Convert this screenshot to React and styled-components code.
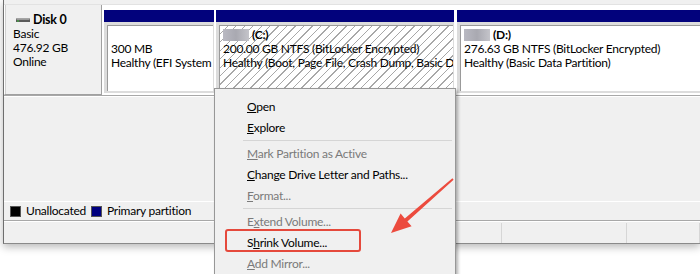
import styled, { createGlobalStyle } from 'styled-components';

const GlobalStyle = createGlobalStyle`
  html, body {
    margin: 0;
    padding: 0;
    background: #fff;
  }
  body {
    font-family: Lato, "Segoe UI", "Liberation Sans", sans-serif;
    font-size: 12px;
    letter-spacing: -0.25px;
    color: #000;
  }
`;

const partitions = [
    { id: 'efi', width: 110, name: null, size: '300 MB', status: 'Healthy (EFI System Partition)' },
    { id: 'c', width: 238, name: '(C:)', size: '200.00 GB NTFS (BitLocker Encrypted)', status: 'Healthy (Boot, Page File, Crash Dump, Basic Data Partition)', hatched: true },
    { id: 'd', width: 262, name: '(D:)', size: '276.63 GB NTFS (BitLocker Encrypted)', status: 'Healthy (Basic Data Partition)' },
];

const menuItems = [
    { label: 'Open', key: 0 },
    { label: 'Explore', key: 0 },
    { separator: true },
    { label: 'Mark Partition as Active', key: 0, disabled: true },
    { label: 'Change Drive Letter and Paths...', key: 0 },
    { label: 'Format...', key: 0, disabled: true },
    { separator: true },
    { label: 'Extend Volume...', key: 1, disabled: true },
    { label: 'Shrink Volume...', key: 1, marked: true },
    { label: 'Add Mirror...', key: 0, disabled: true },
];

const Mnemonic = ({ text, at }) => (
    <>
        {text.slice(0, at)}
        <u>{text[at]}</u>
        {text.slice(at + 1)}
    </>
);

const DiskIcon = () => (
    <svg width="14" height="5" viewBox="0 0 14 5">
        <rect x="0" y="0.5" width="14" height="3.5" fill="#5a5a5a" />
        <rect x="0.5" y="1" width="13" height="1" fill="#9a9a9a" />
        <rect x="1" y="2.5" width="2" height="1" fill="#3fbf3f" />
    </svg>
);

const Arrow = () => (
    <ArrowSvg width="80" height="75" viewBox="0 0 80 75">
        <polygon
            points="73.6,9.8 27.4,51.4 31.6,56.2 11,63 20.6,43.6 24.8,48.4 72.4,8.2"
            fill="#ec4b3e"
        />
    </ArrowSvg>
);

export const App = () => {
    return (
        <>
            <GlobalStyle />
            <Stage>
                <Window>
                    <TopStrip />
                    <DiskRow>
                        <DiskLabel>
                            <DiskTitle>
                                <DiskIcon />
                                <b>Disk 0</b>
                            </DiskTitle>
                            <div>Basic</div>
                            <div>476.92 GB</div>
                            <div>Online</div>
                        </DiskLabel>
                        <PartitionList>
                            {partitions.map(p => (
                                <Partition key={p.id} $width={p.width}>
                                    <PartitionBar />
                                    <PartitionFrame>
                                        <PartitionBody $hatched={p.hatched}>
                                            <Line>
                                                {p.name && (
                                                    <>
                                                        <Blur />
                                                        <b>{p.name}</b>
                                                    </>
                                                )}
                                            </Line>
                                            <Line>{p.size}</Line>
                                            <Line>{p.status}</Line>
                                        </PartitionBody>
                                    </PartitionFrame>
                                </Partition>
                            ))}
                        </PartitionList>
                    </DiskRow>
                    <EmptyArea />
                    <Legend>
                        <Swatch $color="#000" />
                        <span>Unallocated</span>
                        <Swatch $color="#00007f" />
                        <span>Primary partition</span>
                    </Legend>
                    <StatusBar>
                        <StatusCell $width={497} />
                        <StatusCell $width={124} />
                        <StatusCell />
                    </StatusBar>
                </Window>

                <Menu>
                    {menuItems.map((item, i) =>
                        item.separator ? (
                            <Separator key={i} />
                        ) : (
                            <MenuItem key={i} $disabled={item.disabled}>
                                <MenuLabel $marked={item.marked}>
                                    <Mnemonic text={item.label} at={item.key} />
                                </MenuLabel>
                            </MenuItem>
                        )
                    )}
                </Menu>
                <Arrow />
            </Stage>
        </>
    );
};

const Stage = styled.div`
  position: relative;
  width: 700px;
  height: 274px;
  overflow: hidden;
  background: #fff;
`;

const Window = styled.div`
  margin-left: 3px;
  height: 243px;
  display: flex;
  flex-direction: column;
  background: #f0f0f0;
  border-left: 1px solid #6e6e6e;
  border-bottom: 1px solid #8a8a8a;
  box-shadow: 0 3px 8px rgba(0, 0, 0, 0.28);
  overflow: hidden;
`;

const TopStrip = styled.div`
  height: 4px;
  background: #f0f0f0;
  border-bottom: 1px solid #e2e2e2;
`;

const DiskRow = styled.div`
  display: flex;
  height: 90px;
  border-bottom: 1px solid #a8a8a8;
  box-shadow: 0 1px 0 #fff;
`;

const DiskLabel = styled.div`
  flex: 0 0 auto;
  width: 84px;
  padding: 8px 4px 0 8px;
  line-height: 14px;
  white-space: nowrap;
  background: #f0f0f0;
  border-left: 1px solid #fff;
  border-right: 1px solid #a0a0a0;
  border-bottom: 1px solid #a0a0a0;
  box-shadow: inset 1px 0 0 #cfcfcf;
`;

const DiskTitle = styled.div`
  display: flex;
  align-items: center;
  gap: 3px;
  margin-left: 3px;
  font-size: 12.5px;
`;

const PartitionList = styled.div`
  flex: 1;
  min-width: 0;
  display: flex;
  gap: 2px;
  padding: 5px 0 2px 2px;
  background: #fff;
  overflow: hidden;
`;

const Partition = styled.div`
  flex: 0 0 ${props => props.$width}px;
  width: ${props => props.$width}px;
  min-width: 0;
  display: flex;
  flex-direction: column;

  & + & + & {
    margin-left: 1px;
  }
`;

const PartitionBar = styled.div`
  height: 12px;
  background: #02027c;
`;

const PartitionFrame = styled.div`
  flex: 1;
  min-width: 0;
  display: flex;
  padding: 3px 1px 2px 3px;
  background: #dcdcdc;
`;

const PartitionBody = styled.div`
  flex: 1;
  min-width: 0;
  overflow: hidden;
  padding: 2px 3px 0 3px;
  border-top: 1px solid #9a9a9a;
  border-left: 1px solid #9a9a9a;
  background: ${props =>
        props.$hatched
            ? 'repeating-linear-gradient(135deg, #fff 0 5px, #a8a8a8 5px 6px)'
            : '#fff'};
`;

const Line = styled.div`
  height: 14px;
  line-height: 14px;
  white-space: nowrap;
  display: flex;
  align-items: center;
  gap: 3px;
`;

const Blur = styled.span`
  display: inline-block;
  flex: 0 0 26px;
  height: 12px;
  background: linear-gradient(90deg, #b9b9c2, #a9a9b1 50%, #c4c4ca);
`;

const EmptyArea = styled.div`
  flex: 1;
  border-bottom: 1px solid #fff;
`;

const Legend = styled.div`
  display: flex;
  align-items: center;
  gap: 5px;
  height: 18px;
  padding-left: 6px;
  border-bottom: 1px solid #a8a8a8;
  box-shadow: 0 1px 0 #fff;
  line-height: 14px;
`;

const Swatch = styled.span`
  width: 9px;
  height: 9px;
  background: ${props => props.$color};
  border: 1px solid #555;
`;

const StatusBar = styled.div`
  display: flex;
  height: 20px;
  margin-top: 2px;
  background: #f0f0f0;
`;

const StatusCell = styled.div`
  flex: ${props => (props.$width ? `0 0 ${props.$width}px` : '1')};
  border-right: 1px solid #d6d6d6;
`;

const Menu = styled.div`
  position: absolute;
  left: 214px;
  top: 88px;
  width: 240px;
  height: 200px;
  padding-top: 7px;
  background: #f0f0f0;
  border: 1px solid #979797;
  box-shadow: 2px 2px 3px rgba(0, 0, 0, 0.3);
`;

const MenuItem = styled.div`
  height: 21px;
  line-height: 21px;
  padding-left: 32px;
  color: ${props => (props.$disabled ? '#7a7a7a' : '#000')};
  white-space: nowrap;
`;

const MenuLabel = styled.span`
  position: relative;

  &::before {
    content: '';
    display: ${props => (props.$marked ? 'block' : 'none')};
    position: absolute;
    left: -22px;
    width: 136px;
    top: -6px;
    height: 23px;
    box-sizing: border-box;
    border: 2px solid #e5493c;
    border-radius: 3px;
  }
`;

const Separator = styled.div`
  height: 1px;
  margin: 2px 3px 2px 28px;
  background: #d5d5d5;
`;

const ArrowSvg = styled.svg`
  position: absolute;
  left: 380px;
  top: 170px;
`;

export default App;
